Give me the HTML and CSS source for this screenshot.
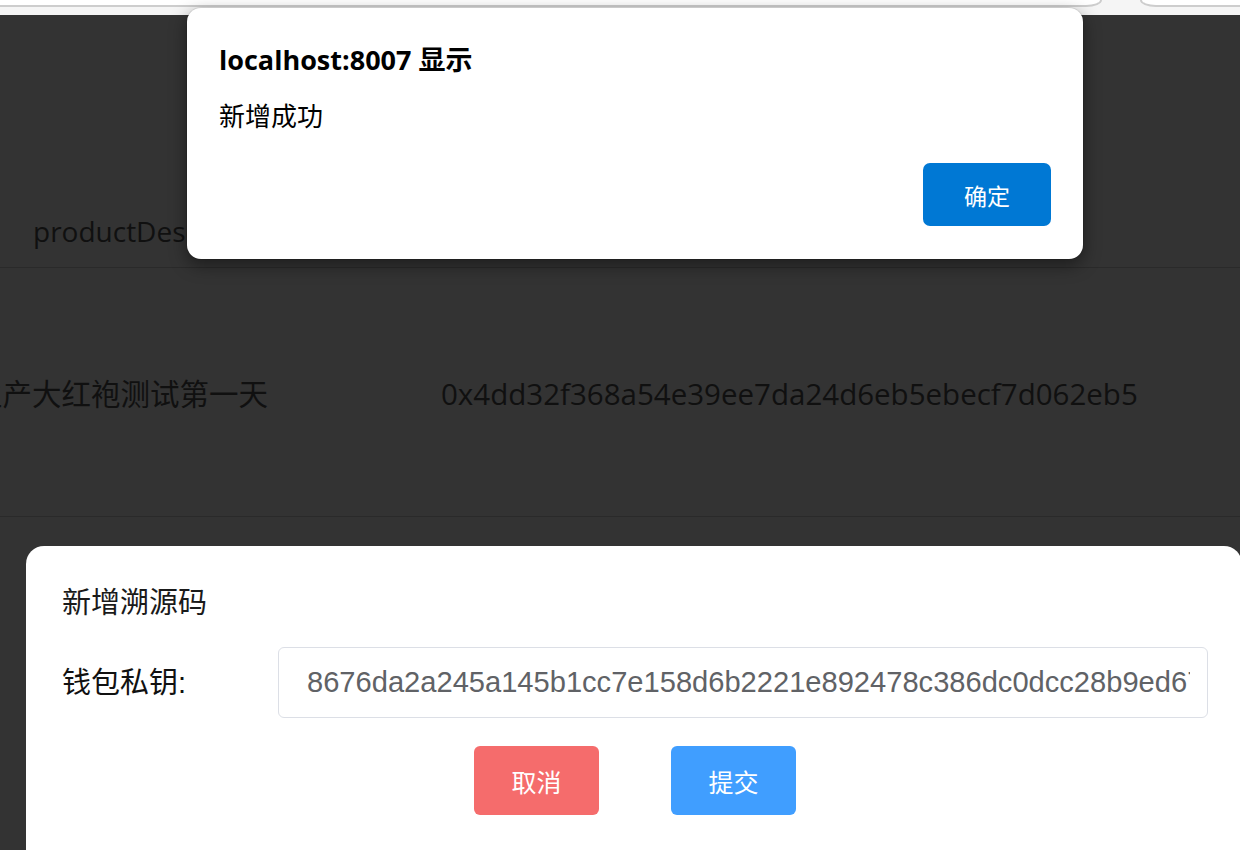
FILE: index.html
```html
<!DOCTYPE html>
<html lang="zh-CN">
<head>
<meta charset="utf-8">
<title>新增溯源码</title>
<link rel="stylesheet" href="styles.css">
</head>
<body>
<div class="chrome">
  <div class="chrome-box chrome-left"></div>
  <div class="chrome-box chrome-right"></div>
</div>

<main class="page">
  <div class="table">
    <div class="row head">
      <div class="cell c1">productDescription</div>
      <div class="cell c2">productHash</div>
    </div>
    <div class="row body-row">
      <div class="cell c1 cjk"><span class="shift">生产大红袍测试第一天</span></div>
      <div class="cell c2 hash">0x4dd32f368a54e39ee7da24d6eb5ebecf7d062eb5</div>
    </div>
    <div class="row body-row last"></div>
  </div>
</main>

<div class="alert" role="alertdialog">
  <div class="alert-title">localhost:8007 显示</div>
  <div class="alert-msg">新增成功</div>
  <div class="alert-actions">
    <button class="alert-btn" type="button">确定</button>
  </div>
</div>

<div class="dialog" role="dialog">
  <div class="dialog-title">新增溯源码</div>
  <div class="form-row">
    <label class="form-label" for="pk">钱包私钥:</label>
    <input id="pk" class="form-input" type="text" value="8676da2a245a145b1cc7e158d6b2221e892478c386dc0dcc28b9ed67a1f39c04">
  </div>
  <div class="dialog-actions">
    <button class="btn btn-cancel" type="button">取消</button>
    <button class="btn btn-submit" type="button">提交</button>
  </div>
</div>
</body>
</html>
```

FILE: styles.css
```css
* { box-sizing: border-box; }

html, body {
  margin: 0;
  padding: 0;
  height: 100%;
  overflow: hidden;
}

body {
  background: #333333;
  font-family: "Open Sans", "Noto Sans CJK SC", sans-serif;
  position: relative;
}

/* browser chrome remnant */
.chrome {
  height: 15px;
  background: #f5f5f5;
  display: flex;
  justify-content: space-between;
  overflow: hidden;
}
.chrome-box {
  height: 7px;
  background: #ffffff;
  border-bottom: 2px solid #cdcdcd;
}
.chrome-left {
  width: 1132px;
  margin-left: -30px;
  border-right: 2px solid #cdcdcd;
  border-bottom-right-radius: 16px 7px;
}
.chrome-right {
  width: 130px;
  margin-right: -30px;
  border-left: 2px solid #cdcdcd;
  border-bottom-left-radius: 16px 7px;
}

/* dimmed table */
.page {
  color: #101010;
}
.table {
  display: flex;
  flex-direction: column;
}
.row {
  display: grid;
  grid-template-columns: 441px 1fr;
  border-bottom: 1px solid #2a2a2a;
}
.row.last {
  border-bottom: 0;
}
.head {
  height: 253px;
  align-items: end;
  padding-bottom: 20px;
}
.body-row {
  height: 249px;
  align-items: center;
  padding-top: 4px;
}
.cell {
  font-size: 28px;
  line-height: 32px;
  white-space: nowrap;
}
.cell.cjk {
  font-size: 29.5px;
}
.cell.hash {
  font-size: 29.5px;
}
.head .c1 {
  padding-left: 33px;
}
.shift {
  display: inline-block;
  margin-left: -27px;
}

/* native alert */
.alert {
  position: absolute;
  left: 187px;
  top: 8px;
  width: 896px;
  height: 251px;
  background: #ffffff;
  border-radius: 14px;
  box-shadow: 0 6px 18px rgba(0, 0, 0, 0.45), 0 0 0 1px rgba(0, 0, 0, 0.08);
  padding: 34px 32px 33px;
  display: flex;
  flex-direction: column;
  color: #000000;
}
.alert-title {
  font-weight: 700;
  font-size: 27px;
  line-height: 36px;
}
.alert-msg {
  margin-top: 21px;
  font-size: 26px;
  line-height: 34px;
}
.alert-actions {
  margin-top: auto;
  display: flex;
  justify-content: flex-end;
}
.alert-btn {
  width: 128px;
  height: 63px;
  border: 0;
  border-radius: 7px;
  background: #0078d4;
  color: #ffffff;
  font-family: "Open Sans", "Noto Sans CJK SC", sans-serif;
  font-size: 23px;
  padding: 0;
}

/* element-style dialog */
.dialog {
  position: absolute;
  left: 26px;
  top: 546px;
  width: 1216px;
  height: 330px;
  background: #ffffff;
  border-radius: 18px;
  padding: 39px 34px 0 36px;
  font-family: "Liberation Sans", "Noto Sans CJK SC", sans-serif;
  color: #1a1a1a;
}
.dialog-title {
  font-size: 29px;
  line-height: 36px;
}
.form-row {
  margin-top: 26px;
  display: flex;
  align-items: center;
}
.form-label {
  width: 216px;
  flex: 0 0 216px;
  font-size: 29px;
  line-height: 36px;
  color: #111111;
}
.form-input {
  width: 930px;
  height: 71px;
  border: 1px solid #dcdfe6;
  border-radius: 6px;
  padding: 0 17px 0 28px;
  font-family: "Liberation Sans", sans-serif;
  font-size: 29.1px;
  color: #606266;
  background: #ffffff;
  outline: none;
}
.dialog-actions {
  margin-top: 28px;
  display: flex;
  justify-content: center;
  gap: 72px;
}
.btn {
  width: 125px;
  height: 69px;
  border: 0;
  border-radius: 6px;
  color: #ffffff;
  font-family: "Liberation Sans", "Noto Sans CJK SC", sans-serif;
  font-size: 25px;
  padding: 0;
}
.btn-cancel { background: #f56c6c; }
.btn-submit { background: #409eff; }
```
